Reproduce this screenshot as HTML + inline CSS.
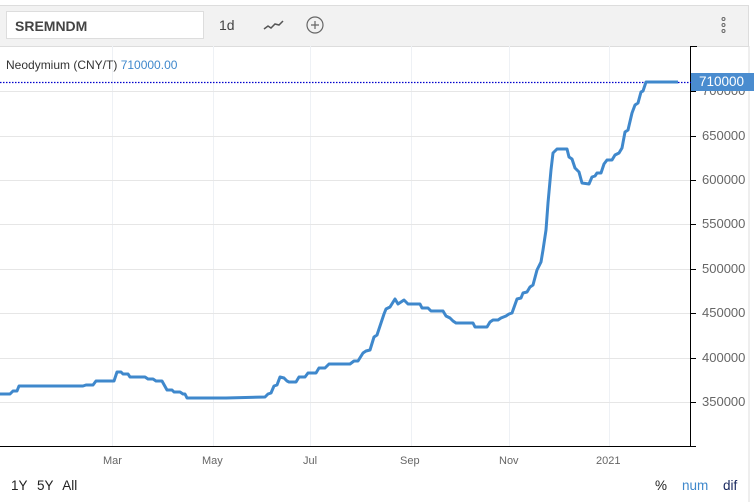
<!DOCTYPE html>
<html><head><style>
body{margin:0;width:754px;height:502px;background:#fff;font-family:"Liberation Sans",sans-serif;position:relative;overflow:hidden}
.a{position:absolute}
.tb{left:0;top:5px;width:748px;height:40px;background:#f2f2f2;border-top:1px solid #ddd;border-bottom:1px solid #ddd;border-right:1px solid #ddd}
.inp{left:6px;top:11px;width:198px;height:28px;background:#fff;border:1px solid #ddd;font-weight:bold;font-size:14px;color:#444;line-height:28px;padding-left:8px;box-sizing:border-box}
.yl{left:702px;font-size:13px;color:#666}
.xl{top:455px;font-size:11px;color:#666}
</style></head><body>
<div class="a tb"></div>
<div class="a inp">SREMNDM</div>
<div class="a" style="left:219px;top:17px;font-size:14px;color:#444">1d</div>
<svg class="a" style="left:0;top:0" width="754" height="502">
<polyline points="264,29 268,26 271,28 275,24 279,25 283,21" fill="none" stroke="#555" stroke-width="1.5"/>
<circle cx="315" cy="25" r="8" fill="none" stroke="#666" stroke-width="1.2"/>
<path d="M311 25h8M315 21v8" stroke="#666" stroke-width="1.2"/>
<circle cx="723.5" cy="19" r="1.5" fill="none" stroke="#666"/><circle cx="723.5" cy="25" r="1.5" fill="none" stroke="#666"/><circle cx="723.5" cy="31" r="1.5" fill="none" stroke="#666"/>
<line x1="749" y1="46" x2="749" y2="502" stroke="#ddd"/>
<g stroke="#eef1f5" stroke-width="1">
<line x1="112.5" y1="46" x2="112.5" y2="446"/><line x1="213.5" y1="46" x2="213.5" y2="446"/><line x1="310.5" y1="46" x2="310.5" y2="446"/><line x1="411.5" y1="46" x2="411.5" y2="446"/><line x1="509.5" y1="46" x2="509.5" y2="446"/><line x1="609.5" y1="46" x2="609.5" y2="446"/>
</g>
<g stroke="#e6e6e6" stroke-width="1">
<line x1="0" y1="91.5" x2="690" y2="91.5"/><line x1="0" y1="136.5" x2="690" y2="136.5"/><line x1="0" y1="180.5" x2="690" y2="180.5"/><line x1="0" y1="224.5" x2="690" y2="224.5"/><line x1="0" y1="269.5" x2="690" y2="269.5"/><line x1="0" y1="313.5" x2="690" y2="313.5"/><line x1="0" y1="358.5" x2="690" y2="358.5"/><line x1="0" y1="402.5" x2="690" y2="402.5"/>
</g>
<g stroke="#000" stroke-width="1">
<line x1="0" y1="446.5" x2="696" y2="446.5"/><line x1="690.5" y1="46" x2="690.5" y2="447"/>
<line x1="690" y1="46.5" x2="697" y2="46.5"/>
<line x1="690" y1="91.5" x2="696" y2="91.5"/><line x1="690" y1="136.5" x2="696" y2="136.5"/><line x1="690" y1="180.5" x2="696" y2="180.5"/><line x1="690" y1="224.5" x2="696" y2="224.5"/><line x1="690" y1="269.5" x2="696" y2="269.5"/><line x1="690" y1="313.5" x2="696" y2="313.5"/><line x1="690" y1="358.5" x2="696" y2="358.5"/><line x1="690" y1="402.5" x2="696" y2="402.5"/>
</g>
<line x1="0" y1="82.5" x2="691" y2="82.5" stroke="#0000cc" stroke-width="1.2" stroke-dasharray="1.5,1.5"/>
<polyline fill="none" stroke="#3f88cc" stroke-width="3" stroke-linejoin="round" points="0,394 10,394 13,391 17,391 19,386 83,386 86,385 93,385 96,381 114,381 117,372 121,372 123,374 128,374 130,377 145,377 148,379 153,379 156,381 162,381 167,390 172,390 174,392 180,392 183,394 185,394 187,398 226,398 265,397 268,394 271,393 274,386 277,385 280,377 284,378 287,381 289,382 296,382 299,377 305,377 308,373 316,373 319,368 325,368 329,364 350,364 354,361 358,361 363,353 366,351 370,350 374,337 377,335 384,314 386,309 390,307 395,299 398,304 401,302 404,300 406,302 408,304 420,304 422,308 428,308 431,311 443,311 446,316 450,318 453,321 456,323 473,323 475,327 487,327 490,322 493,320 498,320 501,318 506,316 509,314 512,313 517,299 521,298 523,293 527,292 530,287 533,285 537,270 541,262 543,250 546,230 548,203 551,170 553,153 557,149 567,149 569,157 572,159 575,168 579,172 582,183 589,184 592,177 595,176 597,173 601,173 604,164 607,160 612,160 615,155 619,153 622,148 625,132 628,130 632,113 635,105 638,103 641,92 643,91 646,82 678,82"/>
</svg>
<div class="a" style="left:6px;top:58px;font-size:12px;color:#333">Neodymium (CNY/T) <span style="color:#3f88cc">710000.00</span></div>
<div class="a yl" style="top:83px">700000</div>
<div class="a" style="left:691px;top:73px;width:63px;height:18px;background:#4a8ccf;color:#fff;font-size:13.5px;line-height:18px;padding-left:8px;box-sizing:border-box">710000</div>
<div class="a yl" style="top:128px">650000</div>
<div class="a yl" style="top:172px">600000</div>
<div class="a yl" style="top:216px">550000</div>
<div class="a yl" style="top:261px">500000</div>
<div class="a yl" style="top:305px">450000</div>
<div class="a yl" style="top:350px">400000</div>
<div class="a yl" style="top:394px">350000</div>
<div class="a xl" style="left:103px">Mar</div>
<div class="a xl" style="left:202px">May</div>
<div class="a xl" style="left:303px">Jul</div>
<div class="a xl" style="left:400px">Sep</div>
<div class="a xl" style="left:499px">Nov</div>
<div class="a xl" style="left:596px">2021</div>
<div class="a" style="left:11px;top:478px;font-size:13.5px;color:#222;word-spacing:6px">1Y 5Y All</div>
<div class="a" style="left:655px;top:478px;font-size:13.5px;color:#222">%</div>
<div class="a" style="left:682px;top:478px;font-size:13.5px;color:#3f88cc">num</div>
<div class="a" style="left:723px;top:478px;font-size:13.5px;color:#1a2a60">dif</div>
</body></html>
